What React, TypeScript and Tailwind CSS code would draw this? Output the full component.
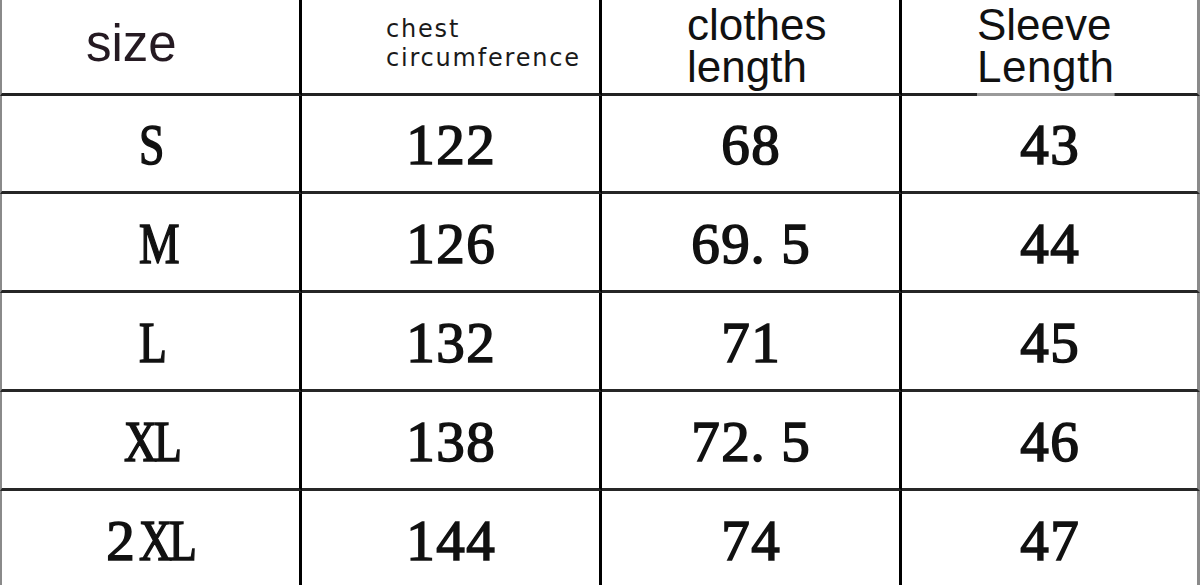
import React from 'react';

interface SizeRow {
    size: string;
    chest: string;
    length: string;
    sleeve: string;
}

const rows: SizeRow[] = [
    { size: 'S', chest: '122', length: '68', sleeve: '43' },
    { size: 'M', chest: '126', length: '69.5', sleeve: '44' },
    { size: 'L', chest: '132', length: '71', sleeve: '45' },
    { size: 'XL', chest: '138', length: '72.5', sleeve: '46' },
    { size: '2XL', chest: '144', length: '74', sleeve: '47' },
];

const sans = "[font-family:'Liberation_Sans',Arial,sans-serif]";
const serif = "[font-family:'Liberation_Serif','Times_New_Roman',serif]";

// the printed chart uses a fixed-pitch font, so every glyph gets its own slot
function Value({ value }: { value: string }) {
    return (
        <>
            {value.split('').map((ch, i) => (
                <span
                    key={i}
                    className={`inline-block w-[30px] ${ch === '.' ? 'text-left' : 'text-center'} ${
                        /[A-Z]/.test(ch) ? 'scale-x-[0.8]' : ''
                    }`}
                >
                    {ch}
                </span>
            ))}
        </>
    );
}

function DataCell({ value, first, last }: { value: string; first?: boolean; last?: boolean }) {
    return (
        <div
            className={`flex items-center justify-center border-b-[3px] border-r-[3px] border-b-[#262626] pt-[2px] ${
                last ? 'border-r-[#8a8a8a]' : 'border-r-black'
            } ${first ? 'border-l-2 border-l-[#8a8a8a]' : ''}`}
        >
            <span
                className={`whitespace-nowrap text-[57px] leading-none text-[#111] [-webkit-text-stroke:1.6px_#111] ${serif}`}
            >
                <Value value={value} />
            </span>
        </div>
    );
}

export default function App() {
    return (
        <div className="w-[1200px] h-[585px] overflow-hidden bg-white">
            <div className="grid grid-cols-[302px_300px_300px_298px] grid-rows-[96px_98px_99px_99px_99px_99px]">
                {/* Header */}
                <div className="flex items-start border-b-[3px] border-r-[3px] border-l-2 border-l-[#8a8a8a] border-b-[#222] border-r-black pl-[84px] pt-[18px]">
                    <span className={`text-[51px] leading-none text-[#251a22] ${sans}`}>size</span>
                </div>
                <div className="flex flex-col items-start border-b-[3px] border-r-[3px] border-b-[#222] border-r-black pl-[84px] pt-[15px]">
                    <span className="text-[24px] leading-[29px] tracking-[1.8px] text-[#1a1a1a] [font-family:'DejaVu_Sans',sans-serif]">
                        chest
                    </span>
                    <span className="text-[24px] leading-[29px] tracking-[1.8px] text-[#1a1a1a] [font-family:'DejaVu_Sans',sans-serif]">
                        circumference
                    </span>
                </div>
                <div className="flex flex-col items-start border-b-[3px] border-r-[3px] border-b-[#222] border-r-black pl-[85px] pt-[4px]">
                    <span className={`text-[44px] leading-[42px] text-[#111] ${sans}`}>clothes</span>
                    <span className={`text-[44px] leading-[42px] text-[#111] ${sans}`}>length</span>
                </div>
                <div className="flex flex-col items-start border-b-[3px] border-r-[3px] border-b-[#222] border-r-[#8a8a8a] pl-[75px] pt-[4px]">
                    <span className={`text-[44px] leading-[42px] text-[#111] ${sans}`}>Sleeve</span>
                    <span
                        className={`text-[44px] leading-[42px] tracking-[0.5px] text-[#111] underline decoration-[#9a9a9a] decoration-[3px] underline-offset-[11px] ${sans}`}
                    >
                        Length
                    </span>
                </div>

                {/* Rows */}
                {rows.map((row) => (
                    <React.Fragment key={row.size}>
                        <DataCell value={row.size} first />
                        <DataCell value={row.chest} />
                        <DataCell value={row.length} />
                        <DataCell value={row.sleeve} last />
                    </React.Fragment>
                ))}
            </div>
        </div>
    );
}
